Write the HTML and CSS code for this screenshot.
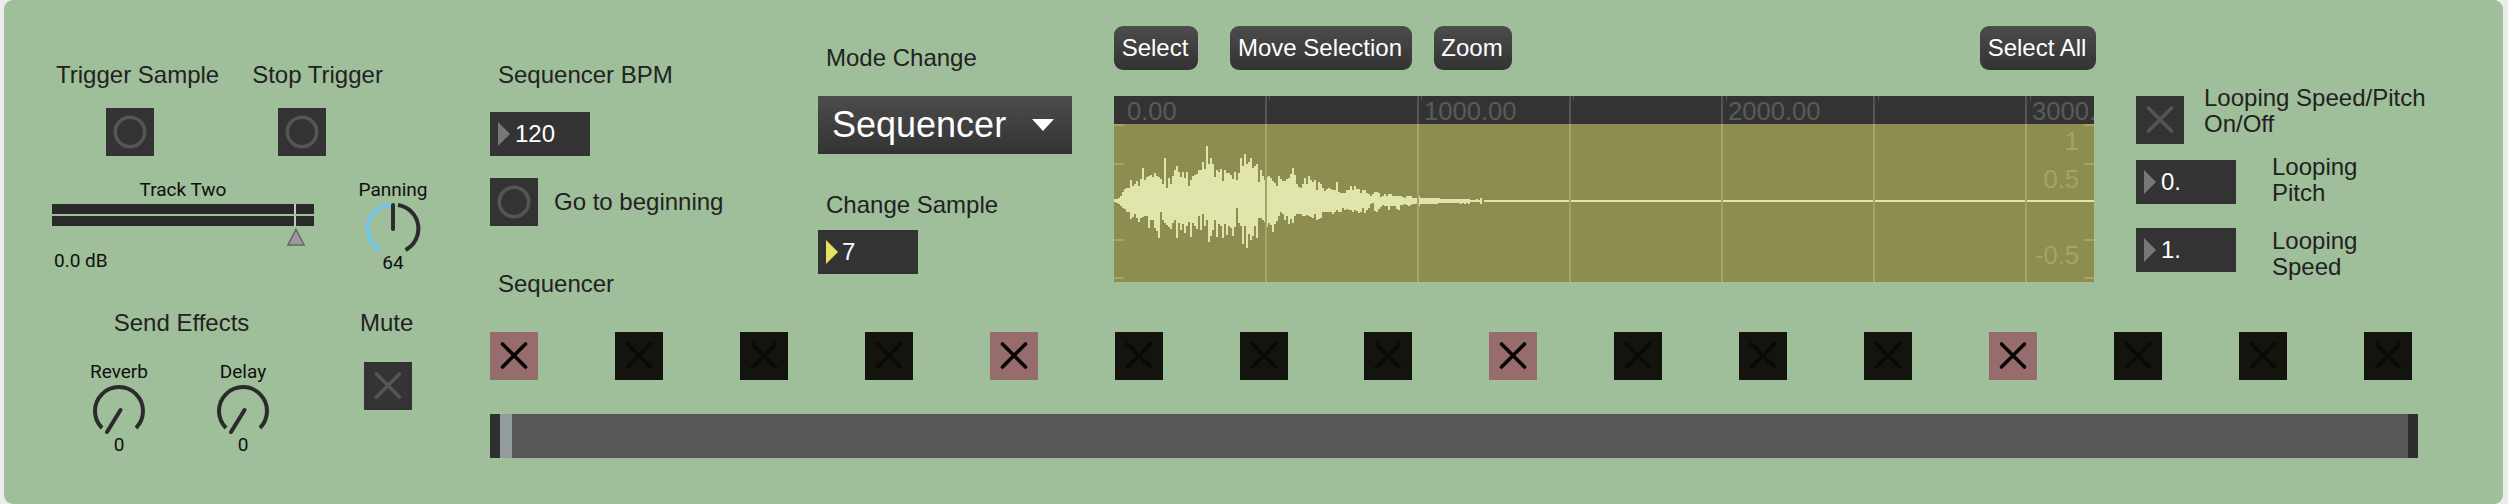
FILE: index.html
```html
<!DOCTYPE html>
<html lang="en">
<head>
<meta charset="utf-8">
<title>Track Two</title>
<link rel="stylesheet" href="styles.css">
</head>
<body>
<svg class="defs" width="0" height="0" aria-hidden="true">
  <symbol id="x" viewBox="0 0 48 48"><path d="M12.5 12 35.5 35M35.5 12 12.5 35" fill="none" stroke="currentColor" stroke-width="3.6" stroke-linecap="round"/></symbol>
  <symbol id="ring" viewBox="0 0 48 48"><circle cx="24" cy="24" r="14.7" fill="none" stroke="currentColor" stroke-width="3.6"/></symbol>
  <symbol id="tri" viewBox="0 0 12 24"><path d="M0 0 12 12 0 24Z" fill="currentColor"/></symbol>
  <symbol id="knob-zero" viewBox="0 0 56 50">
    <path d="M11 44A24 24 0 1 1 45 44" fill="none" stroke="#2b2b2b" stroke-width="4"/>
    <path d="M29.5 26 16 48" fill="none" stroke="#2b2b2b" stroke-width="4" stroke-linecap="round"/>
  </symbol>
</svg>
<main class="panel">
  <section class="left">
    <div class="trigger-labels"><span class="label">Trigger Sample</span><span class="label">Stop Trigger</span></div>
    <div class="trigger-buttons">
      <div class="tile"><svg class="icon ring"><use href="#ring"/></svg></div>
      <div class="tile"><svg class="icon ring"><use href="#ring"/></svg></div>
    </div>
    <div class="meter-row">
      <div class="meter-col">
        <div class="small center">Track Two</div>
        <div class="meter"><div class="meter-bar"></div><div class="meter-bar"></div></div>
        <div class="meter-scale">
          <svg class="meter-tri" viewBox="0 0 18 18"><path d="M9 1.5 17 17H1Z" fill="#9b9b9b" stroke="#666" stroke-width="1.6"/></svg>
        </div>
        <div class="small db">0.0 dB</div>
      </div>
      <div class="knob knob-pan">
        <div class="small">Panning</div>
        <svg class="knob-svg" viewBox="0 0 56 50">
          <path d="M15 48A24 24 0 0 1 26 3" fill="none" stroke="#74c4ee" stroke-width="4"/>
          <path d="M33 3A24 24 0 0 1 40.5 48" fill="none" stroke="#2b2b2b" stroke-width="4"/>
          <path d="M28 3V27" fill="none" stroke="#2b2b2b" stroke-width="4" stroke-linecap="round"/>
        </svg>
        <div class="small">64</div>
      </div>
    </div>
    <div class="send-row">
      <div class="send-col">
        <div class="label center">Send Effects</div>
        <div class="send-knobs">
          <div class="knob"><div class="small">Reverb</div><svg class="knob-svg"><use href="#knob-zero"/></svg><div class="small">0</div></div>
          <div class="knob"><div class="small">Delay</div><svg class="knob-svg"><use href="#knob-zero"/></svg><div class="small">0</div></div>
        </div>
      </div>
      <div class="mute-col">
        <div class="label">Mute</div>
        <div class="tile mute"><svg class="icon ring"><use href="#x"/></svg></div>
      </div>
    </div>
  </section>

  <section class="main">
    <div class="upper">
      <div class="bpm-col">
        <div class="label inset">Sequencer BPM</div>
        <div class="num num-bpm"><svg class="num-tri"><use href="#tri"/></svg>120</div>
        <div class="go-row">
          <div class="tile"><svg class="icon ring"><use href="#ring"/></svg></div>
          <span class="label">Go to beginning</span>
        </div>
        <div class="label inset seq-label">Sequencer</div>
      </div>
      <div class="mode-col">
        <div class="label inset">Mode Change</div>
        <div class="dropdown"><span>Sequencer</span><svg class="dropdown-tri" viewBox="0 0 22 12"><path d="M0 0H22L11 12Z" fill="#fff"/></svg></div>
        <div class="label inset sample-label">Change Sample</div>
        <div class="num num-sample"><svg class="num-tri active"><use href="#tri"/></svg>7</div>
      </div>
      <div class="wave-col">
        <div class="buttons">
          <div class="btn btn-select">Select</div>
          <div class="btn btn-move">Move Selection</div>
          <div class="btn btn-zoom">Zoom</div>
          <div class="btn btn-all">Select All</div>
        </div>
        <div class="wave">
          <svg class="wave-svg" viewBox="0 0 980 186" shape-rendering="crispEdges">
            <rect width="980" height="186" fill="#8e8d50"/>
            <rect width="980" height="28" fill="#333"/>
            <g transform="translate(-4 44) scale(.33333)">
              <path fill="none" stroke="#dfe5ab" stroke-width="6" d="M15 178V186M21 176V190M27 174V192M33 168V198M39 156V204M45 148V208M51 144V215M57 144V215M63 120V238M69 138V232M75 132V222M81 122V235M87 138V246M93 116V235M99 84V232M105 120V228M111 110V228M117 108V264M123 104V240M129 112V240M135 100V264M141 108V272M147 112V294M153 118V216M159 132V240M165 54V250M171 144V256M177 114V262M183 132V266M189 108V250M195 90V240M201 78V294M207 96V250M213 112V270M219 96V252M225 114V278M231 96V258M237 138V246M243 120V292M249 108V248M255 104V258M261 102V268M267 90V228M273 90V270M279 66V222M285 88V258M291 18V240M297 72V306M303 54V288M309 72V270M315 112V240M321 90V290M327 96V252M333 86V258M339 124V294M345 90V252M351 98V286M357 100V258M363 104V264M369 116V288M375 96V260M381 120V204M387 98V250M393 54V258M399 78V312M405 42V258M411 72V324M417 66V282M423 54V300M429 84V288M435 78V258M441 72V294M447 126V234M453 90V234M459 108V240M465 120V246M471 110V262M477 108V248M483 114V255M489 124V276M495 128V252M501 138V244M507 108V228M513 118V216M519 124V222M525 124V240M531 118V228M537 114V252M543 102V236M549 84V250M555 104V228M561 132V222M567 142V222M573 144V222M579 132V228M585 114V228M591 132V224M597 108V228M603 120V232M609 126V234M615 120V222M621 150V240M627 126V238M633 132V234M639 144V216M645 152V216M651 148V216M657 144V216M663 148V216M669 150V222M675 150V216M681 126V210M687 156V216M693 160V216M699 160V204M705 160V210M711 150V208M717 150V210M723 138V210M729 150V216M735 138V210M741 146V214M747 146V220M753 160V216M759 150V204M765 150V220M771 160V210M777 162V204M783 168V192M789 162V190M795 156V214M801 156V216M807 160V208M813 172V200M819 168V196M825 162V198M831 168V198M837 162V210M843 162V198M849 168V198M855 168V198M861 168V208M867 168V210M873 168V196M879 172V196M885 174V192M891 168V196M897 168V198M903 168V196M909 174V192M915 174V192M921 174V192M927 168V198M933 174V192M939 174V192M945 174V192M951 174V192M957 174V192M963 174V192M969 174V192M975 174V192M981 174V192M987 174V190M993 176V190M999 176V190M1005 176V190M1011 176V190M1017 176V190M1023 176V190M1029 176V190M1035 176V190M1041 178V190M1047 178V190M1053 176V192M1059 176V190M1065 176V192M1071 176V190M1077 176V192M1083 180V186M1089 180V186M1095 180V186M1101 176V186M1107 180V186M1113 174V192"/>
            </g>
            <rect x="370" y="104" width="610" height="2" fill="#dfe5ab"/>
            <g fill="#a5a367">
              <rect x="151" y="28" width="2" height="158"/><rect x="303" y="28" width="2" height="158"/><rect x="455" y="28" width="2" height="158"/><rect x="607" y="28" width="2" height="158"/><rect x="759" y="28" width="2" height="158"/><rect x="911" y="28" width="2" height="158"/>
              <rect y="28" width="10" height="2"/><rect y="67" width="10" height="2"/><rect y="143" width="10" height="2"/><rect y="181" width="10" height="2"/>
              <rect x="970" y="28" width="10" height="2"/><rect x="970" y="67" width="10" height="2"/><rect x="970" y="143" width="10" height="2"/><rect x="970" y="181" width="10" height="2"/>
            </g>
            <g fill="#555">
              <rect x="151" width="2" height="28"/><rect x="303" width="2" height="28"/><rect x="455" width="2" height="28"/><rect x="607" width="2" height="28"/><rect x="759" width="2" height="28"/><rect x="911" width="2" height="28"/>
              <rect x="155" width="1" height="5"/><rect x="307" width="1" height="5"/><rect x="459" width="1" height="5"/><rect x="612" width="1" height="5"/><rect x="764" width="1" height="5"/><rect x="916" width="1" height="5"/>
            </g>
          </svg>
          <div class="ruler"><span class="tick-first">0.00</span><span class="tick">1000.00</span><span class="tick">2000.00</span><span class="tick">3000.00</span></div>
          <span class="amp amp-1">1</span><span class="amp amp-2">0.5</span><span class="amp amp-3">-0.5</span>
        </div>
      </div>
      <div class="right-col">
        <div class="loop-row loop-toggle">
          <div class="tile mute"><svg class="icon ring"><use href="#x"/></svg></div>
          <div class="label loop-title">Looping Speed/Pitch<br>On/Off</div>
        </div>
        <div class="loop-row loop-pitch">
          <div class="num"><svg class="num-tri"><use href="#tri"/></svg>0.</div>
          <div class="label loop-name">Looping<br>Pitch</div>
        </div>
        <div class="loop-row loop-speed">
          <div class="num"><svg class="num-tri"><use href="#tri"/></svg>1.</div>
          <div class="label loop-name">Looping<br>Speed</div>
        </div>
      </div>
    </div>
    <div class="steps">
      <div class="step on"><svg class="icon"><use href="#x"/></svg></div>
      <div class="step"><svg class="icon"><use href="#x"/></svg></div>
      <div class="step"><svg class="icon"><use href="#x"/></svg></div>
      <div class="step"><svg class="icon"><use href="#x"/></svg></div>
      <div class="step on"><svg class="icon"><use href="#x"/></svg></div>
      <div class="step"><svg class="icon"><use href="#x"/></svg></div>
      <div class="step"><svg class="icon"><use href="#x"/></svg></div>
      <div class="step"><svg class="icon"><use href="#x"/></svg></div>
      <div class="step on"><svg class="icon"><use href="#x"/></svg></div>
      <div class="step"><svg class="icon"><use href="#x"/></svg></div>
      <div class="step"><svg class="icon"><use href="#x"/></svg></div>
      <div class="step"><svg class="icon"><use href="#x"/></svg></div>
      <div class="step on"><svg class="icon"><use href="#x"/></svg></div>
      <div class="step"><svg class="icon"><use href="#x"/></svg></div>
      <div class="step"><svg class="icon"><use href="#x"/></svg></div>
      <div class="step"><svg class="icon"><use href="#x"/></svg></div>
    </div>
    <div class="scrub"><div class="scrub-end"></div><div class="scrub-head"></div><div class="scrub-fill"></div><div class="scrub-end"></div></div>
  </section>
</main>
</body>
</html>
```
FILE: styles.css
```css
* { box-sizing: border-box; }
html, body { margin: 0; padding: 0; }
body {
  width: 2508px;
  height: 504px;
  background: #ececec;
  overflow: hidden;
  padding-left: 4px;
  font-family: "Liberation Sans", Arial, sans-serif;
}
.defs { position: absolute; }
.panel {
  display: flex;
  width: 2499px;
  height: 504px;
  background: #9fbe9a;
  border-radius: 9px;
  overflow: hidden;
}
.label {
  font-size: 24px;
  line-height: 26px;
  color: #222;
  white-space: nowrap;
}
.small {
  font-family: Roboto, sans-serif;
  font-size: 19px;
  line-height: 22px;
  color: #0f0f0f;
  white-space: nowrap;
}
.center { text-align: center; }
.inset { padding-left: 8px; }
.tile {
  display: block;
  flex: none;
  width: 48px;
  height: 48px;
  background: #333;
}
.icon { display: block; width: 48px; height: 48px; }
.ring { color: #555; }

/* left block */
.left { flex: none; width: 486px; padding-top: 62px; }
.trigger-labels { display: flex; gap: 33px; padding-left: 52px; }
.trigger-buttons { display: flex; gap: 124px; padding-left: 102px; margin-top: 20px; }
.meter-row { display: flex; margin-top: 23px; margin-left: 48px; }
.meter-col { flex: none; width: 262px; }
.meter { display: flex; flex-direction: column; gap: 2px; margin-top: 3px; }
.meter-bar {
  height: 10px;
  background: linear-gradient(to right, #2a2a2a 242px, #b9cfb5 242px, #b9cfb5 244px, #2a2a2a 244px);
}
.meter-scale { display: flex; justify-content: flex-end; padding-right: 9px; margin-top: 2px; }
.meter-tri { display: block; width: 18px; height: 18px; }
.db { margin-top: 4px; padding-left: 2px; }
.knob {
  display: flex;
  flex-direction: column;
  align-items: center;
  flex: none;
  width: 80px;
}
.knob-pan { margin-left: 39px; }
.knob-svg { display: block; width: 56px; height: 50px; margin-top: 1px; }
.send-row { display: flex; margin-top: 36px; }
.send-col { flex: none; width: 205px; margin-left: 75px; }
.send-knobs { display: flex; gap: 44px; margin-top: 25px; }
.mute-col { display: flex; flex-direction: column; align-items: center; margin-left: 76px; }
.mute { margin-top: 26px; margin-left: 3px; }

/* main block */
.main { flex: none; width: 2000px; }
.upper { display: flex; height: 332px; }
.bpm-col { flex: none; width: 328px; padding-top: 62px; }
.num {
  display: flex;
  align-items: center;
  gap: 5px;
  flex: none;
  width: 100px;
  height: 44px;
  padding-left: 8px;
  background: #333;
  color: #fff;
  font-size: 24px;
}
.num-tri { display: block; flex: none; width: 12px; height: 24px; color: #777; }
.num-tri.active { color: #e8e263; }
.num-bpm { margin-top: 24px; }
.go-row { display: flex; align-items: center; gap: 16px; margin-top: 22px; }
.seq-label { margin-top: 45px; }
.mode-col { flex: none; width: 296px; padding-top: 45px; }
.dropdown {
  display: flex;
  align-items: center;
  justify-content: space-between;
  width: 254px;
  height: 58px;
  margin-top: 25px;
  padding: 0 18px 0 14px;
  background: linear-gradient(#4c4c4c, #333);
  color: #fff;
  font-size: 36px;
}
.dropdown-tri { display: block; width: 22px; height: 12px; }
.sample-label { margin-top: 38px; }
.num-sample { margin-top: 12px; gap: 4px; }
.wave-col { flex: none; width: 982px; padding-top: 26px; }
.buttons { display: flex; }
.btn {
  display: flex;
  align-items: center;
  justify-content: center;
  height: 44px;
  padding-right: 2px;
  border-radius: 9px;
  background: linear-gradient(#4c4c4c, #333);
  color: #fff;
  font-size: 24px;
  white-space: nowrap;
}
.btn-select { width: 84px; }
.btn-move { width: 182px; margin-left: 32px; }
.btn-zoom { width: 78px; margin-left: 22px; }
.btn-all { width: 116px; margin-left: auto; }
.wave { position: relative; width: 980px; height: 186px; margin-top: 26px; overflow: hidden; }
.wave-svg { position: absolute; inset: 0; width: 980px; height: 186px; display: block; }
.ruler {
  position: absolute;
  top: 1px;
  left: 1px;
  display: flex;
  font-size: 25.6px;
  line-height: 28px;
  color: #5a5a5a;
  white-space: nowrap;
}
.tick-first { flex: none; width: 309px; padding-left: 12px; }
.tick { flex: none; width: 304px; }
.amp {
  position: absolute;
  right: 15px;
  font-size: 25.6px;
  line-height: 28px;
  color: #a5a367;
}
.amp-1 { top: 31px; }
.amp-2 { top: 69px; }
.amp-3 { top: 145px; }
.right-col { flex: none; margin-left: 40px; padding-top: 85px; }
.loop-row { display: flex; align-items: flex-start; }
.loop-toggle .mute { margin: 11px 0 0; }
.loop-title { margin-left: 20px; }
.loop-pitch { margin-top: 10px; }
.loop-pitch .num { margin-top: 6px; }
.loop-speed { margin-top: 22px; }
.loop-name { margin-left: 36px; }
.steps { display: flex; justify-content: space-between; width: 1922px; }
.step { flex: none; width: 48px; height: 48px; background: #13140e; color: #090a06; }
.step.on { background: #976c6c; color: #050505; }
.scrub { display: flex; width: 1928px; height: 44px; margin-top: 34px; background: #575757; }
.scrub-end { flex: none; width: 10px; background: #2e2e2e; }
.scrub-head { flex: none; width: 12px; background: #929c9c; }
.scrub-fill { flex: 1; }
```
